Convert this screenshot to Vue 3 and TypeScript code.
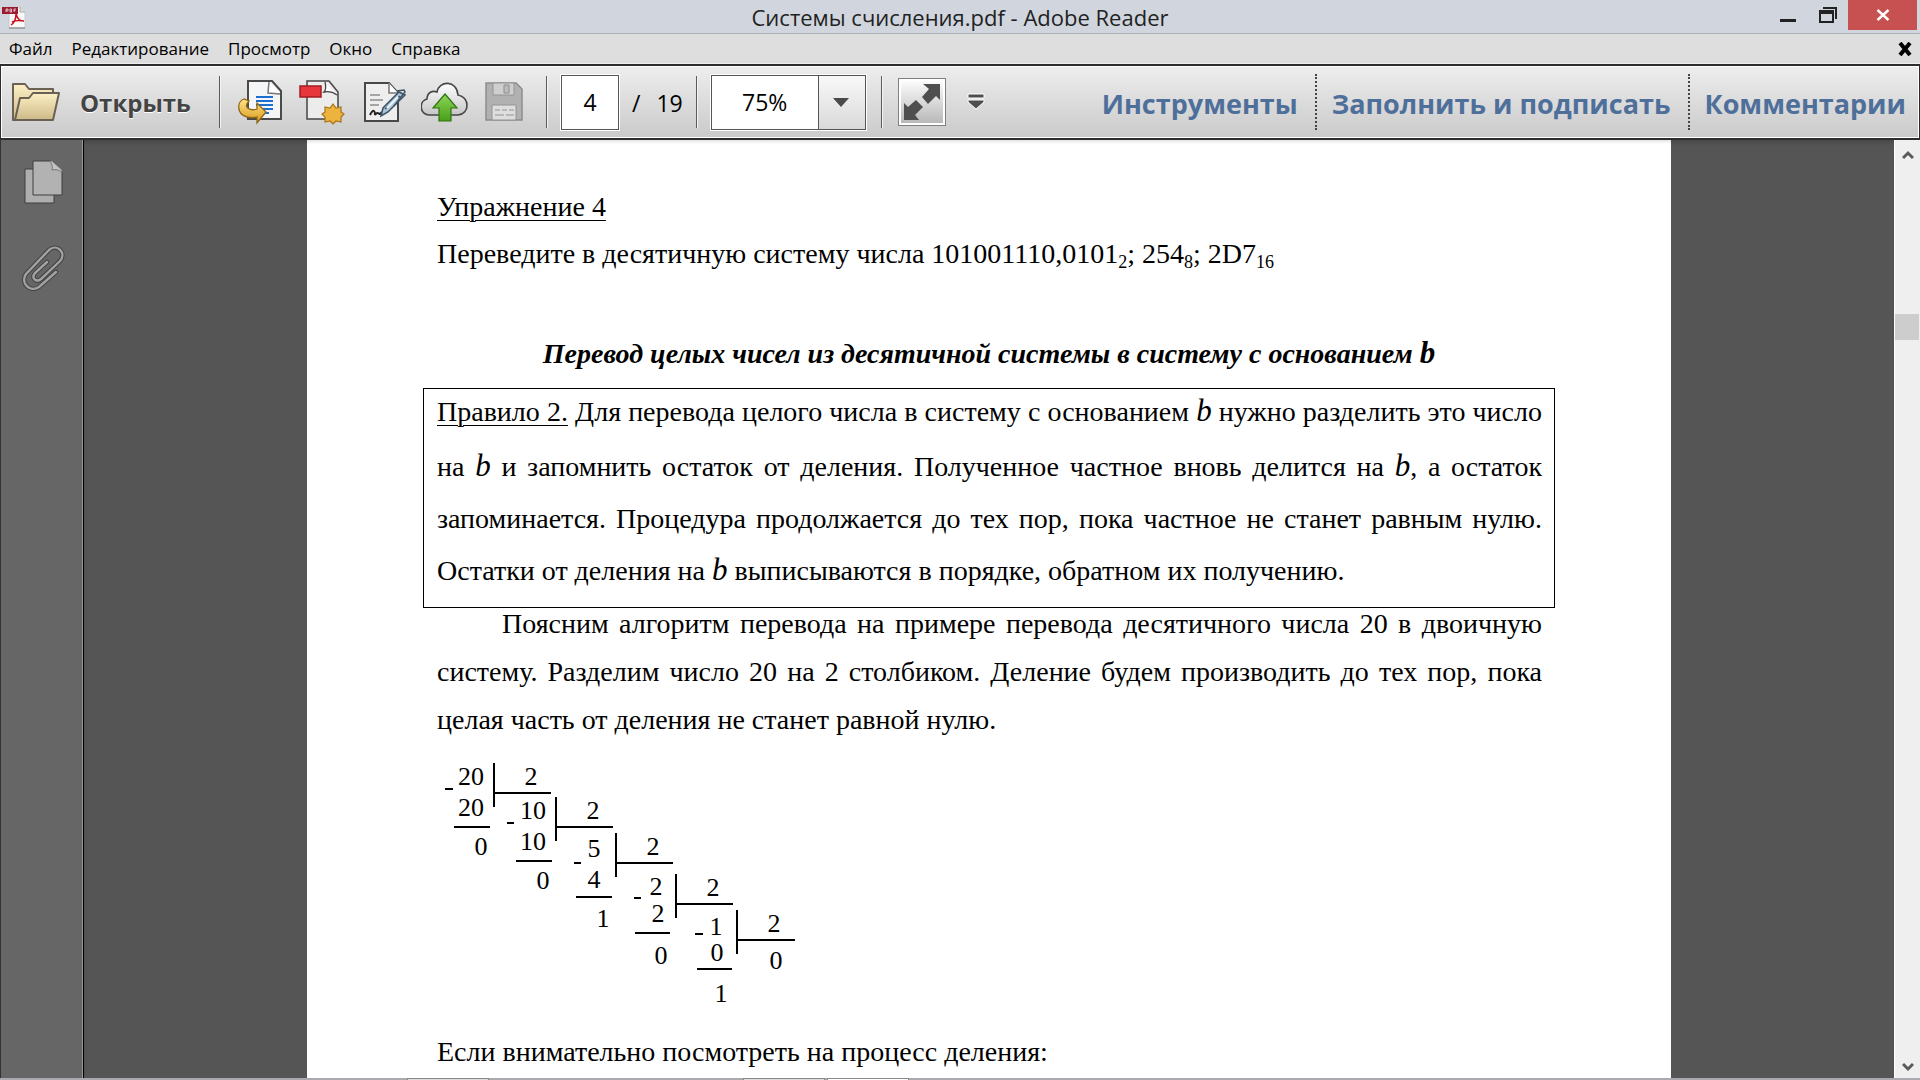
<script setup lang="ts">
import { ref } from 'vue'

interface Line { x1: number; y1: number; x2: number; y2: number }
interface Digit { x: number; y: number; t: string }

const menu: string[] = ['Файл', 'Редактирование', 'Просмотр', 'Окно', 'Справка']
const panels: string[] = ['Инструменты', 'Заполнить и подписать', 'Комментарии']
const pageNumber = ref('4')
const zoom = ref('75%')
const zoomLevels: string[] = ['50%', '75%', '100%', '125%']

// Column division of 20 by 2, five steps
const rules: Line[] = [
  { x1: 64, y1: 13, x2: 64, y2: 57 }, { x1: 64, y1: 43, x2: 121, y2: 43 },
  { x1: 24, y1: 77, x2: 60, y2: 77 },
  { x1: 126, y1: 47, x2: 126, y2: 91 }, { x1: 126, y1: 77, x2: 183, y2: 77 },
  { x1: 86, y1: 111, x2: 122, y2: 111 },
  { x1: 186, y1: 83, x2: 186, y2: 127 }, { x1: 186, y1: 113, x2: 243, y2: 113 },
  { x1: 146, y1: 147, x2: 182, y2: 147 },
  { x1: 246, y1: 124, x2: 246, y2: 168 }, { x1: 246, y1: 154, x2: 303, y2: 154 },
  { x1: 205, y1: 183, x2: 240, y2: 183 },
  { x1: 307, y1: 160, x2: 307, y2: 204 }, { x1: 307, y1: 190, x2: 365, y2: 190 },
  { x1: 267, y1: 219, x2: 302, y2: 219 },
  { x1: 15, y1: 39, x2: 23, y2: 39 }, { x1: 77, y1: 73, x2: 84, y2: 73 },
  { x1: 144, y1: 113, x2: 151, y2: 113 }, { x1: 204, y1: 148, x2: 211, y2: 148 },
  { x1: 265, y1: 184, x2: 273, y2: 184 },
]
const digits: Digit[] = [
  { x: 41, y: 35, t: '20' }, { x: 41, y: 66, t: '20' }, { x: 51, y: 105, t: '0' }, { x: 101, y: 35, t: '2' },
  { x: 103, y: 69, t: '10' }, { x: 103, y: 100, t: '10' }, { x: 113, y: 139, t: '0' }, { x: 163, y: 69, t: '2' },
  { x: 164, y: 107, t: '5' }, { x: 164, y: 138, t: '4' }, { x: 173, y: 177, t: '1' }, { x: 223, y: 105, t: '2' },
  { x: 226, y: 145, t: '2' }, { x: 228, y: 172, t: '2' }, { x: 231, y: 214, t: '0' }, { x: 283, y: 146, t: '2' },
  { x: 286, y: 185, t: '1' }, { x: 287, y: 211, t: '0' }, { x: 291, y: 252, t: '1' }, { x: 344, y: 182, t: '2' },
  { x: 346, y: 219, t: '0' },
]
</script>

<template>
  <div class="window">
    <header class="titlebar">
      <svg class="app-icon" width="24" height="24" viewBox="0 0 24 24">
        <path d="M7 1h11l5 5v16H7z" fill="#f8f8f8" stroke="#c9c9cc" />
        <path d="M7 22h16" stroke="#777" stroke-width="1" />
        <path d="M18 1v5h5" fill="#ddd" stroke="#aaa" />
        <path d="M14 8c2 6 4 7 8 7M14 8c0 6-2 9-5 11M10 16c4-2 7-2 12-1" fill="none" stroke="#c8101c" stroke-width="1.5" />
        <path d="M0 1h16v7H0z" fill="#9b1c30" />
        <path d="M4 6V3h2v2H4M8 3v3h1.500V3zM12 6V3h2M12 4.500h1.500" fill="none" stroke="#f3dfe2" stroke-width=".8" />
      </svg>
      <h1 class="title">Системы счисления.pdf - Adobe Reader</h1>
      <div class="controls">
        <button class="ctl" aria-label="Свернуть">
          <svg width="16" height="18" viewBox="0 0 16 18"><path d="M0 13h16v3H0z" fill="#222" /></svg>
        </button>
        <button class="ctl" aria-label="Восстановить">
          <svg width="18" height="18" viewBox="0 0 18 18">
            <path d="M4 2h13v11" fill="none" stroke="#222" stroke-width="2" />
            <path d="M1 5h13v11H1z" fill="none" stroke="#222" stroke-width="2" />
            <path d="M0 4h15v4H0z" fill="#222" />
          </svg>
        </button>
        <button class="ctl close" aria-label="Закрыть">
          <svg width="14" height="12" viewBox="0 0 14 12"><path d="M1.500 1l11 10M12.500 1l-11 10" stroke="#fff" stroke-width="2.400" /></svg>
        </button>
      </div>
    </header>

    <nav class="menubar">
      <a v-for="m in menu" :key="m" href="#">{{ m }}</a>
      <button class="doc-close" aria-label="Закрыть документ">
        <svg width="14" height="14" viewBox="0 0 14 14"><path d="M2 1l10 12M12 1L2 13" stroke="#000" stroke-width="4" /></svg>
      </button>
    </nav>

    <div class="toolbar">
      <button class="tool open">
        <svg width="50" height="42" viewBox="0 0 50 42">
          <defs>
            <linearGradient id="fold" x1="0" y1="0" x2="0" y2="1"><stop offset="0" stop-color="#fdf0c6" /><stop offset="1" stop-color="#cdb987" /></linearGradient>
          </defs>
          <path d="M2 39V3h12l4 5h24v30z" fill="url(#fold)" stroke="#6a6152" stroke-width="2" stroke-linejoin="round" />
          <path d="M4 39L9 17h9l4-5h26l-6 27z" fill="url(#fold)" stroke="#6a6152" stroke-width="2" stroke-linejoin="round" />
        </svg>
        <span>Открыть</span>
      </button>
      <i class="sep" />
      <div class="icons">
        <button class="tool" aria-label="Преобразовать">
          <svg width="46" height="46" viewBox="0 0 46 46">
            <defs><linearGradient id="gold" x1="0" y1="0" x2="0" y2="1"><stop offset="0" stop-color="#ffe38a" /><stop offset="1" stop-color="#d89a1c" /></linearGradient></defs>
            <path d="M11 2h24l9 10v28H11z" fill="#f4f5f7" stroke="#4a4a4a" stroke-width="2" />
            <path d="M32 3l-1 11 12 1" fill="#fff" stroke="#777" stroke-width="1.500" />
            <path d="M19 18h17M19 22h17M19 26h17M22 30h14M26 34h6" stroke="#1c6fd0" stroke-width="2" />
            <path d="M7 20C0 22-1 35 10 38c4 1 7 1 10 0v6l9-11-9-9v6C14 32 5 29 12 22z" fill="url(#gold)" stroke="#8f6516" stroke-width="1.300" />
          </svg>
        </button>
        <button class="tool" aria-label="Создать PDF">
          <svg width="46" height="46" viewBox="0 0 46 46">
            <path d="M8 2h22l9 11v27H8z" fill="#ececec" stroke="#444" stroke-width="1.500" />
            <path d="M26 3c1 4 1 8-1 10 5-1 9 0 13 3" fill="#fff" stroke="#444" stroke-width="1.300" />
            <path d="M1 7h21v11H1z" fill="#e8363d" stroke="#a01c22" stroke-width="1.500" />
            <path d="M34 25l3 4 5-1 0 5 3 2-3 3 0 5-5-1-3 3-3-3-5 1 0-5-3-3 3-2 0-5 5 1z" fill="#ecb43f" stroke="#a8741a" stroke-width="1.200" />
          </svg>
        </button>
        <button class="tool" aria-label="Подписать">
          <svg class="wide" width="44" height="46" viewBox="0 0 44 46">
            <path d="M4 4h24l9 10v28H4z" fill="#eee" stroke="#484848" stroke-width="2" />
            <path d="M28 4v10h9" fill="#fff" stroke="#777" stroke-width="1.500" />
            <path d="M9 16h10M9 21h13M9 26h9" stroke="#a5a5a5" stroke-width="2" />
            <path d="M9 36c3-6 5-5 5 0 2-4 4-1 5-1l2-2" fill="none" stroke="#222" stroke-width="2" />
            <path d="M20 37l2-8 16-16 6 3-17 17z" fill="#a9c4da" stroke="#3d5266" stroke-width="1.500" />
            <path d="M24 30l15-13M36 12l7-1 1 2-11 14" fill="none" stroke="#3d5266" stroke-width="1.500" />
            <path d="M26 29l11-11" stroke="#f2f9ff" stroke-width="2" />
          </svg>
        </button>
        <button class="tool" aria-label="Отправить в облако">
          <svg width="47" height="46" viewBox="2 0 47 46">
            <defs>
              <linearGradient id="cloud" x1="0" y1="0" x2="0" y2="1"><stop offset="0" stop-color="#fff" /><stop offset="1" stop-color="#c6c6c6" /></linearGradient>
              <linearGradient id="green" x1="0" y1="0" x2="0" y2="1"><stop offset="0" stop-color="#8fd45a" /><stop offset="1" stop-color="#47a017" /></linearGradient>
            </defs>
            <path d="M10 36C0 35 0 22 8 20c0-6 5-9 10-7C20 1 38 1 39 16c12 2 12 19 0 20z" fill="url(#cloud)" stroke="#474747" stroke-width="1.600" />
            <path d="M26 15l12 14h-6v13H20V29h-6z" fill="url(#green)" stroke="#2f7411" stroke-width="1.200" />
          </svg>
        </button>
        <button class="tool" aria-label="Сохранить" disabled>
          <svg width="40" height="46" viewBox="0 0 40 46">
            <path d="M2 4h30l6 6v31H2z" fill="#b1b1b1" stroke="#8d8d8d" stroke-width="1.500" />
            <path d="M9 4h21v12H9z" fill="#cfcfcf" stroke="#949494" />
            <path d="M20 6h5v8h-5z" fill="#bcbcbc" stroke="#8d8d8d" />
            <path d="M8 26h24v15H8z" fill="#dedede" stroke="#949494" />
            <path d="M11 31h5M18 31h5M25 31h5M11 36h9M22 36h8" stroke="#b8b8b8" stroke-width="2" />
          </svg>
        </button>
      </div>
      <i class="sep" />
      <input v-model="pageNumber" class="page-input" aria-label="Страница" />
      <span class="total"><span>/</span><span>19</span></span>
      <i class="sep" />
      <div class="zoom">
        <select v-model="zoom" aria-label="Масштаб">
          <option v-for="z in zoomLevels" :key="z">{{ z }}</option>
        </select>
        <span class="zoom-arrow"><svg width="16" height="9" viewBox="0 0 16 9"><path d="M0 0h16L8 9z" fill="#4a4a4a" /></svg></span>
      </div>
      <i class="sep" />
      <button class="fit" aria-label="Во весь экран">
        <svg width="38" height="40" viewBox="0 0 38 40">
          <path d="M20 2h17v16l-4-4-8 8-6-7 7-8z" fill="#4f4f4f" />
          <path d="M1 21l4 4 8-7 7 7-8 8 4 5H1z" fill="#4f4f4f" />
        </svg>
      </button>
      <button class="tool more" aria-label="Ещё">
        <svg width="18" height="18" viewBox="0 0 18 18">
          <path d="M1 1h16v4H1zM1 7h16v2l-8 7-8-7z" fill="#4d4d4d" stroke="#fff" />
        </svg>
      </button>
      <div class="panels">
        <button v-for="p in panels" :key="p">{{ p }}</button>
      </div>
    </div>

    <div class="body">
      <aside class="side">
        <button class="tool" aria-label="Миниатюры страниц">
          <svg width="44" height="46" viewBox="0 0 44 46">
            <path d="M4 10h29v34H4z" fill="#aeaeae" stroke="#3f3f3f" />
            <path d="M12 2h19l10 9v25H12z" fill="#b2b2b2" stroke="#3f3f3f" />
            <path d="M29 2c2 3 3 6 2 9 4-1 7 0 10 2l0-2-10-9z" fill="#c4c4c4" stroke="#777" />
          </svg>
        </button>
        <button class="tool" aria-label="Вложения">
          <svg width="44" height="46" viewBox="0 0 44 46">
            <path d="M35 27L18 42C9 48-1 38 5 29L28 5C36-2 46 8 39 16L20 34c-5 4-10-1-6-6l12-11" fill="none" stroke="#444" stroke-width="4.500" stroke-linecap="round" />
            <path d="M35 27L18 42C9 48-1 38 5 29L28 5C36-2 46 8 39 16L20 34c-5 4-10-1-6-6l12-11" fill="none" stroke="#a2a2a2" stroke-width="2.400" stroke-linecap="round" />
          </svg>
        </button>
      </aside>

      <main class="canvas">
        <article class="page">
          <p><u>Упражнение 4</u></p>
          <p>Переведите в десятичную систему числа 101001110,0101<sub>2</sub>; 254<sub>8</sub>; 2D7<sub>16</sub></p>
          <h2>Перевод целых чисел из десятичной системы в систему с основанием <b class="var">b</b></h2>
          <div class="rule">
            <span class="line fill first"><u>Правило 2.</u> Для перевода целого числа в систему с основанием <i class="var">b</i> нужно разделить это число</span>
            <span class="line fill">на <i class="var">b</i> и запомнить остаток от деления. Полученное частное вновь делится на <i class="var">b</i>, а остаток</span>
            <span class="line fill">запоминается. Процедура продолжается до тех пор, пока частное не станет равным нулю.</span>
            <span class="line">Остатки от деления на <i class="var">b</i> выписываются в порядке, обратном их получению.</span>
          </div>
          <p class="example">
            <span class="line fill indent">Поясним алгоритм перевода на примере перевода десятичного числа 20 в двоичную</span>
            <span class="line fill">систему. Разделим число 20 на 2 столбиком. Деление будем производить до тех пор, пока</span>
            <span class="line">целая часть от деления не станет равной нулю.</span>
          </p>
          <svg class="division" width="400" height="270" viewBox="0 0 400 270">
            <line v-for="(l, i) in rules" :key="'l' + i" :x1="l.x1" :y1="l.y1" :x2="l.x2" :y2="l.y2" />
            <text v-for="(d, i) in digits" :key="'d' + i" :x="d.x" :y="d.y">{{ d.t }}</text>
          </svg>
          <p>Если внимательно посмотреть на процесс деления:</p>
        </article>
      </main>

      <div class="scroll">
        <svg width="12" height="10" viewBox="0 0 12 10"><path d="M1 8l5-5 5 5" fill="none" stroke="#5a5a5a" stroke-width="3" /></svg>
        <div class="track"><div class="thumb" /></div>
        <svg width="12" height="10" viewBox="0 0 12 10"><path d="M1 2l5 5 5-5" fill="none" stroke="#5a5a5a" stroke-width="3" /></svg>
      </div>
    </div>
    <footer class="taskbar"><i class="far" /><i /><i class="active" /></footer>
  </div>
</template>

<style>
body { overflow: hidden; }
</style>

<style scoped>
* { box-sizing: border-box; }
button { border: 0; padding: 0; background: none; font: inherit; color: inherit; }
svg { display: block; flex: none; }
.window { display: flex; flex-direction: column; height: 100vh; font-family: "Open Sans", "Noto Sans", sans-serif; }

.titlebar { display: flex; align-items: flex-start; height: 34px; flex: none; background: #d1d6de; border-bottom: 1px solid #adb1b7; }
.app-icon { margin: 6px 0 0 2px; }
.title { flex: 1; margin: 0; padding-left: 126px; text-align: center; font-size: 22px; line-height: 34px; font-weight: 400; color: #222; }
.controls { display: flex; width: 149px; margin-right: 3px; height: 30px; }
.ctl { display: flex; justify-content: center; padding-top: 6px; width: 40px; }
.close { width: 69px; align-items: center; padding: 0; background: #c75050; }

.menubar { display: flex; align-items: center; gap: 19px; height: 30px; flex: none; padding: 0 8px 0 9px; background: #dedede; font-size: 17px; border-bottom: 1px solid #efefef; }
.menubar a { color: #000; text-decoration: none; line-height: 30px; }
.doc-close { margin-left: auto; }

.toolbar { display: flex; align-items: center; height: 76px; flex: none; border: solid #2d2d2d; border-width: 2px 1px; padding: 0 13px 0 10px; background: linear-gradient(#eeeeee, #cacaca); box-shadow: inset 0 0 0 1px #fff; }
.open { display: flex; align-items: center; gap: 19px; width: 208px; font-size: 24px; font-weight: 700; color: #444; text-shadow: 0 1px 0 #fff; }
.sep { width: 2px; height: 52px; flex: none; background: #5b5b5b; border-right: 1px solid #f4f4f4; }
.icons { display: flex; gap: 16px; width: 325px; padding-left: 16px; }
.wide { overflow: visible; }
.page-input { width: 58px; height: 55px; margin-left: 13px; border: 1px solid #555; outline: 1px solid #fff; padding: 0; text-align: center; font: 23px "Open Sans", sans-serif; color: #000; }
.total { display: flex; gap: 16px; width: 77px; padding: 2px 0 0 13px; font-size: 23px; }
.zoom { position: relative; margin: 0 15px 0 13px; width: 155px; height: 55px; flex: none; }
.zoom select { appearance: none; width: 155px; height: 55px; border: 1px solid #555; outline: 1px solid #fff; border-radius: 0; background: #fff; padding: 0 0 0 30px; font: 23px "Open Sans", sans-serif; color: #000; }
.zoom-arrow { position: absolute; right: 1px; top: 1px; bottom: 1px; width: 47px; padding-right: 2px; display: flex; align-items: center; justify-content: center; border-left: 1px solid #555; background: linear-gradient(#f8f8f8, #dadada); pointer-events: none; }
.fit { width: 48px; height: 48px; margin-left: 15px; flex: none; display: flex; align-items: center; justify-content: center; border: 1px solid #808080; background: linear-gradient(#fff, #b5b5b5); box-shadow: inset 0 0 0 2px #fff; }
.more { margin-left: 21px; }
.panels { display: flex; margin-left: auto; font-size: 27px; font-weight: 700; color: #4f6f9b; text-shadow: 0 1px 0 #fff; white-space: nowrap; }
.panels button { height: 56px; padding: 2px 0 0 15px; margin-left: 17px; border-left: 2px dotted #444; }
.panels button:first-child { border: 0; }

.body { display: flex; flex: 1; min-height: 0; background: #555; }
.side { width: 84px; flex: none; background: #666; border-left: 1px solid #333; border-right: 1px solid #000; box-shadow: inset -1px 0 0 #999; display: flex; flex-direction: column; align-items: flex-start; gap: 40px; padding: 19px 0 0 20px; }
.canvas { flex: 1; min-width: 0; display: flex; justify-content: center; overflow: hidden; box-shadow: inset 0 4px 4px -2px #444; }
.page { width: 1364px; flex: none; background: linear-gradient(#e4e4e4, #fff 4px); padding: 43px 116px 0; font-family: "Liberation Serif", serif; font-size: 28px; line-height: 47px; color: #000; }
.page p { margin: 0; padding: 0 13px 0 14px; white-space: nowrap; }
.page h2 { margin: 47px 0 4px; font-size: 28px; line-height: 60px; font-style: italic; font-weight: 700; text-align: center; white-space: nowrap; }
.page u { text-decoration-thickness: 1px; text-underline-offset: 4px; }
sub { font-size: 18px; line-height: 0; vertical-align: -5px; }
.var { font-size: 31px; line-height: 0; font-style: italic; }
.line { display: block; white-space: nowrap; }
.fill { text-align-last: justify; white-space: normal; }
.indent { padding-left: 65px; }
.rule { border: 1px solid #000; padding: 0 12px 10px 13px; line-height: 52px; }
.rule .first { line-height: 46px; margin-bottom: 6px; }
.page .example { margin-top: -8px; line-height: 48px; }
.division { margin: 6px 0 8px 7px; }
.division line { stroke: #000; stroke-width: 2px; shape-rendering: crispEdges; }
.division text { font-size: 26px; text-anchor: middle; fill: #000; }

.scroll { width: 26px; flex: none; display: flex; flex-direction: column; align-items: center; padding: 10px 0 6px; background: #efefef; border-left: 1px solid #fff; }
.track { flex: 1; align-self: stretch; padding-top: 154px; }
.thumb { width: 24px; height: 26px; background: #cdcdcd; }
.taskbar { display: flex; gap: 2px; height: 2px; flex: none; background: #a9a9ae; padding-left: 407px; }
.taskbar i { width: 82px; background: #ddd; border: 1px solid #888; border-bottom: 0; }
.taskbar .far { margin-right: 252px; }
.taskbar .active { background: #fff; }
</style>
